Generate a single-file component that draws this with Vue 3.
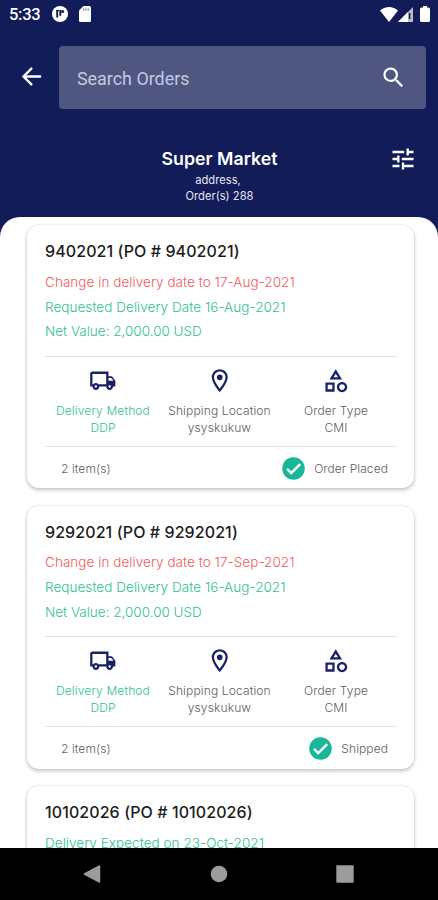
<script setup>
const orders = [
  {
    id: '9402021',
    notice: 'Change in delivery date to 17-Aug-2021',
    alert: true,
    requested: 'Requested Delivery Date 16-Aug-2021',
    netValue: 'Net Value: 2,000.00 USD',
    status: 'Order Placed',
  },
  {
    id: '9292021',
    notice: 'Change in delivery date to 17-Sep-2021',
    alert: true,
    requested: 'Requested Delivery Date 16-Aug-2021',
    netValue: 'Net Value: 2,000.00 USD',
    status: 'Shipped',
  },
  {
    id: '10102026',
    notice: 'Delivery Expected on 23-Oct-2021',
    alert: false,
  },
]

const facts = [
  {
    label: 'Delivery Method',
    value: 'DDP',
    green: true,
    icon: 'M20 8h-3V4H3c-1.1 0-2 .9-2 2v11h2c0 1.66 1.34 3 3 3s3-1.34 3-3h6c0 1.66 1.34 3 3 3s3-1.34 3-3h2v-5l-3-4zm-.5 1.5l1.96 2.5H17V9.5h2.5zM6 18c-.55 0-1-.45-1-1s.45-1 1-1 1 .45 1 1-.45 1-1 1zm2.22-3c-.55-.61-1.33-1-2.22-1s-1.67.39-2.22 1H3V6h12v9H8.22zM18 18c-.55 0-1-.45-1-1s.45-1 1-1 1 .45 1 1-.45 1-1 1z',
  },
  {
    label: 'Shipping Location',
    value: 'ysyskukuw',
    green: false,
    icon: 'M12 2C8.13 2 5 5.13 5 9c0 5.25 7 13 7 13s7-7.75 7-13c0-3.87-3.13-7-7-7zM7 9c0-2.76 2.24-5 5-5s5 2.24 5 5c0 2.88-2.88 7.19-5 9.88C9.92 16.21 7 11.85 7 9zM12 6.5a2.5 2.5 0 1 0 0 5 2.5 2.5 0 0 0 0-5z',
  },
  {
    label: 'Order Type',
    value: 'CMI',
    green: false,
    icon: 'M12 2l-5.5 9h11L12 2zm0 3.84L13.93 9h-3.87L12 5.84zM17.5 13c-2.49 0-4.5 2.01-4.5 4.5s2.01 4.5 4.5 4.5 4.5-2.01 4.5-4.5-2.01-4.5-4.5-4.5zm0 7c-1.38 0-2.5-1.12-2.5-2.5s1.12-2.5 2.5-2.5 2.5 1.12 2.5 2.5-1.12 2.5-2.5 2.5zM3 21.5h8v-8H3v8zm2-6h4v4H5v-4z',
  },
]
</script>

<template>
  <div class="screen">
    <div class="status">
      <span class="clock">5:33</span>
      <svg class="s-app" viewBox="0 0 16 16">
        <circle cx="8" cy="8" r="8" fill="#fff" />
        <path d="M5.200 4v7.500M8.300 4v5.800" fill="none" stroke="#111c58" stroke-width="1.900" />
        <path d="M4.300 3.900h3v1.200h-3z" fill="#111c58" />
        <circle cx="10.600" cy="5.400" r="1.500" fill="#111c58" />
      </svg>
      <svg class="s-sd" viewBox="0 0 12 16">
        <path d="M4.400 0H10.500Q12 0 12 1.500V14.500Q12 16 10.500 16H1.500Q0 16 0 14.500V4.600z" fill="#fff" />
        <path d="M4.700 2.600v1.800M7 2.600v1.800M9.300 2.600v1.800" stroke="#777c9c" stroke-width="1.300" />
      </svg>
      <span class="grow"></span>
      <svg class="s-wifi" viewBox="0 0 18 15">
        <path d="M9 15L0 3.600C5-1.200 13-1.200 18 3.600z" fill="#fff" />
      </svg>
      <svg class="s-cell" viewBox="0 0 15 15">
        <path d="M15 0V15H0z" fill="#b8bbca" />
        <path d="M10 5V15H0z" fill="#fff" />
        <path d="M11.600 6v6" stroke="#111c58" stroke-width="1.500" />
      </svg>
      <svg class="s-bat" viewBox="0 0 10 16">
        <path d="M3 0h4v1.600h1.500Q10 1.600 10 3.200v11.300Q10 16 8.500 16h-7Q0 16 0 14.500V3.200Q0 1.600 1.500 1.600H3z" fill="#fff" />
      </svg>
    </div>

    <div class="bar">
      <svg class="icon" viewBox="0 0 24 24">
        <path d="M19.700 12H5.500M11.900 5L4.900 12l7 7" fill="none" stroke="#fff" stroke-width="2.100" stroke-linecap="round" />
      </svg>
      <div class="field">
        <span class="placeholder">Search Orders</span>
        <svg class="icon" viewBox="0 0 24 24">
          <path fill="#fff" d="M15.500 14h-.79l-.28-.27A6.471 6.471 0 0 0 16 9.500 6.500 6.500 0 1 0 9.500 16c1.610 0 3.090-.59 4.230-1.570l.27.28v.79l5 4.990L20.490 19l-4.990-5zm-6 0C7.010 14 5 11.990 5 9.500S7.010 5 9.500 5 14 7.010 14 9.500 11.990 14 9.500 14z" />
        </svg>
      </div>
    </div>

    <div class="head">
      <div class="store">
        <h1>Super Market</h1>
        <p class="addr">address,</p>
        <p>Order(s) 288</p>
      </div>
      <svg class="tune" viewBox="0 0 24 24">
        <path fill="#fff" d="M3 17v2h6v-2H3zM3 5v2h10V5H3zm10 16v-2h8v-2h-8v-2h-2v6h2zM7 9v2H3v2h4v2h2V9H7zm14 4v-2H11v2h10zm-6-4h2V7h4V5h-4V3h-2v6z" />
      </svg>
    </div>

    <main class="sheet">
      <article v-for="o in orders" :key="o.id" class="card">
        <h2>{{ o.id }} (PO # {{ o.id }})</h2>
        <p class="line" :class="{ alert: o.alert }">{{ o.notice }}</p>
        <template v-if="o.status">
          <p class="line">{{ o.requested }}</p>
          <p class="line net">{{ o.netValue }}</p>
          <div class="facts">
            <div v-for="f in facts" :key="f.label" class="fact" :class="{ green: f.green }">
              <svg viewBox="0 0 24 24"><path :d="f.icon" fill="#1b2166" /></svg>
              <span>{{ f.label }}</span>
              <span>{{ f.value }}</span>
            </div>
          </div>
          <div class="foot">
            <span class="items">2 item(s)</span>
            <svg viewBox="0 0 24 24">
              <circle cx="12" cy="12" r="10" fill="#18b798" />
              <path d="M6.200 12.300l3.800 3.800 7.900-7.900" fill="none" stroke="#fff" stroke-width="2.200" />
            </svg>
            <span>{{ o.status }}</span>
          </div>
        </template>
      </article>
    </main>

    <nav class="nav">
      <svg viewBox="0 0 18 18"><path d="M16.500 1v16L1.500 9z" fill="#9c9c9c" stroke="#9c9c9c" stroke-width="1.500" stroke-linejoin="round" /></svg>
      <svg viewBox="0 0 18 18"><circle cx="9" cy="9" r="8.300" fill="#9c9c9c" /></svg>
      <svg viewBox="0 0 18 18"><rect x=".3" y=".3" width="17.400" height="17.400" rx="1" fill="#9c9c9c" /></svg>
    </nav>
  </div>
</template>

<style>
body {
  margin: 0;
  background: #111c58;
}
</style>

<style scoped>
.screen {
  width: 438px;
  height: 900px;
  display: flex;
  flex-direction: column;
  overflow: hidden;
  background: #111c58;
  color: #fff;
  font-family: Inter, "Liberation Sans", sans-serif;
}
h1, h2, p {
  margin: 0;
}
svg {
  display: block;
  flex: none;
}
.status {
  flex: none;
  height: 28px;
  margin-bottom: 18px;
  padding: 0 8px 0 9px;
  display: flex;
  align-items: center;
}
.clock {
  width: 43px;
  font: 500 16.500px/28px Roboto, sans-serif;
  letter-spacing: -0.300px;
  padding-top: 2px;
}
.s-app { width: 16px; height: 16px; margin-right: 11px; }
.s-sd { width: 12px; height: 16px; }
.grow { flex: 1; }
.s-wifi { width: 18px; height: 15px; }
.s-cell { width: 15px; height: 15px; margin: 1px 7px 0 0; }
.s-bat { width: 10px; height: 16px; }
.bar {
  flex: none;
  height: 63px;
  padding: 0 12px 0 18px;
  display: flex;
  align-items: center;
  gap: 14px;
}
.icon {
  width: 27px;
  height: 27px;
}
.bar > .icon {
  margin-bottom: 3px;
}
.field {
  flex: 1;
  height: 63px;
  box-sizing: border-box;
  padding: 0 19px 0 18px;
  display: flex;
  align-items: center;
  justify-content: space-between;
  border-radius: 4px;
  background: #4f5780;
}
.placeholder {
  font: 400 17.900px/24px Roboto, sans-serif;
  color: #c2c9e3;
  padding-top: 2px;
}
.head {
  flex: none;
  height: 108px;
  display: flex;
  justify-content: space-between;
  padding: 0 21px 0 70px;
}
.store {
  flex: 1;
  padding-top: 38px;
  text-align: center;
  margin-right: 20px;
}
.store h1 {
  font-size: 17.800px;
  line-height: 24px;
  font-weight: 600;
}
.store p {
  font-size: 11.200px;
  line-height: 15px;
  color: #e3e5ef;
}
.store .addr {
  line-height: 18px;
  margin-right: 3px;
}
.tune {
  width: 28px;
  height: 28px;
  margin-top: 36px;
}
.sheet {
  flex: 1;
  min-height: 0;
  overflow: hidden;
  display: flex;
  flex-direction: column;
  gap: 17.500px;
  padding: 8px 24px 0 27px;
  border-radius: 20px 20px 0 0;
  background: #fff;
}
.card {
  flex: none;
  height: 263px;
  box-sizing: border-box;
  padding: 13px 17px 0 18px;
  border-radius: 12px;
  background: #fff;
  box-shadow: 0 2px 4px rgba(0, 0, 0, 0.24), 0 0 2px rgba(0, 0, 0, 0.1);
}
.card h2 {
  font-size: 16px;
  line-height: 26px;
  height: 31.800px;
  font-weight: 500;
  letter-spacing: 0.090px;
  color: #1c1c1c;
}
.line {
  font-size: 13.500px;
  line-height: 24.700px;
  font-weight: 300;
  letter-spacing: 0.050px;
  color: #2fc193;
}
.line.alert {
  color: #f4595c;
}
.line.net {
  letter-spacing: 0;
}
.facts {
  margin-top: 12px;
  height: 89px;
  border-top: 1px solid #dfe1f8;
  border-bottom: 1px solid #dfe1f8;
  display: grid;
  grid-template-columns: 116px 117px 116px;
}
.fact {
  display: flex;
  flex-direction: column;
  align-items: center;
  padding-top: 9.900px;
  font-size: 12px;
  line-height: 17px;
  font-weight: 300;
  letter-spacing: 0.140px;
  color: #5e5e5e;
  white-space: nowrap;
}
.fact svg {
  width: 27.500px;
  height: 27.500px;
  margin-bottom: 7.500px;
}
.fact.green {
  color: #2fc193;
}
.foot {
  height: 43px;
  padding: 0 9px 0 16px;
  display: flex;
  align-items: center;
  font-size: 12px;
  font-weight: 300;
  letter-spacing: 0.080px;
  color: #5e5e5e;
}
.items {
  flex: 1;
}
.foot svg {
  width: 27px;
  height: 27px;
  margin-right: 7px;
}
.nav {
  flex: none;
  height: 52px;
  padding: 0 84px 0 83px;
  display: flex;
  align-items: center;
  justify-content: space-between;
  background: #000;
}
.nav svg {
  width: 18px;
  height: 18px;
}
</style>
